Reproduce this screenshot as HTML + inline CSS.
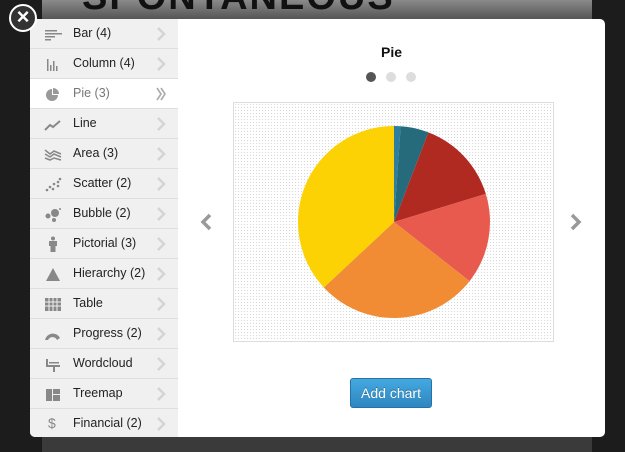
<!DOCTYPE html>
<html><head><meta charset="utf-8"><style>
*{margin:0;padding:0;box-sizing:border-box}
body{width:625px;height:452px;overflow:hidden;background:#1c1c1c;font-family:"Liberation Sans",Arial,sans-serif;position:relative}
.banner{position:absolute;left:42px;top:0;width:550px;height:19px;background:linear-gradient(#8a8a8a,#555);}
.banner span{position:absolute;left:40px;top:-24px;font:900 38px "Liberation Sans",sans-serif;color:#111;letter-spacing:2px}
.bottom{position:absolute;left:42px;top:437px;width:550px;height:15px;background:#3a3a3a}
.modal{position:absolute;left:30px;top:19px;width:575px;height:418px;background:#fff;border-radius:0 5px 5px 5px;overflow:hidden}
.side{position:absolute;left:0;top:0;width:148px;height:418px;background:#f0f0f0}
.row{height:30px;border-bottom:1px solid #dedede;position:relative;font-size:12.5px;color:#222;line-height:29px;padding-left:43px}
.row.sel{background:#fff;color:#777}
.row svg.ic{position:absolute;left:14px;top:7px}
.row svg.ch{position:absolute;left:126px;top:8px}
.title{position:absolute;left:148px;right:0;top:25px;text-align:center;font-weight:bold;font-size:14px;color:#111}
.dot{position:absolute;top:53px;width:10px;height:10px;border-radius:50%;background:#ddd}
.box{position:absolute;left:203px;top:83px;width:321px;height:240px;border:1px solid #ddd;background-color:#fff;background-image:radial-gradient(#d8d8d8 0.6px,transparent 0.8px);background-size:3px 3px}
.btn{position:absolute;left:320px;top:359px;width:82px;height:30px;border-radius:3px;background:linear-gradient(#44a9e0,#2f86c0);border:1px solid #2672a6;color:#fff;font-size:14px;text-align:center;line-height:28px;text-shadow:0 -1px 0 rgba(0,0,0,.3)}
.close{position:absolute;left:9px;top:4px;width:28px;height:28px;border-radius:50%;background:#333;border:2.5px solid #fff;color:#fff;font-size:22px;line-height:21px;text-align:center;font-weight:bold}
</style></head><body>
<div class="banner"><span>SPONTANEOUS</span></div>
<div class="bottom"></div>
<div class="modal">
<div class="side">
<div class="row"><svg class="ic" width="18" height="16"><g fill="#888"><rect x="1" y="4" width="12" height="1.5"/><rect x="1" y="7" width="17" height="1.5"/><rect x="1" y="10" width="10" height="1.5"/><rect x="1" y="13" width="6" height="1.5"/></g></svg>Bar (4)<svg class="ch" width="10" height="14"><path d="M2 1L8 7L2 13" stroke="#d4d4d4" stroke-width="2.5" fill="none"/></svg></div>
<div class="row"><svg class="ic" width="18" height="16"><g fill="#888"><rect x="3" y="3" width="1.5" height="12"/><rect x="6" y="9" width="1.5" height="6"/><rect x="9" y="5" width="1.5" height="10"/><rect x="12" y="10" width="1.5" height="5"/></g></svg>Column (4)<svg class="ch" width="10" height="14"><path d="M2 1L8 7L2 13" stroke="#d4d4d4" stroke-width="2.5" fill="none"/></svg></div>
<div class="row sel"><svg class="ic" width="18" height="16"><path d="M8 3A6 6 0 1 0 14 9H8Z M9 2V8H15A6 6 0 0 0 9 2Z" fill="#999"/></svg>Pie (3)<svg class="ch" width="10" height="14"><path d="M1 1L5 7L1 13M5 1L9 7L5 13" stroke="#aaa" stroke-width="1.6" fill="none"/></svg></div>
<div class="row"><svg class="ic" width="18" height="16"><path d="M1 14L6 9L9 11L16 5" stroke="#888" stroke-width="2" fill="none"/></svg>Line<svg class="ch" width="10" height="14"><path d="M2 1L8 7L2 13" stroke="#d4d4d4" stroke-width="2.5" fill="none"/></svg></div>
<div class="row"><svg class="ic" width="18" height="16"><path d="M1 4L6 8L10 5L17 8M1 8L6 11L10 8L17 11M1 12L6 14L10 12L17 14" stroke="#888" stroke-width="1.5" fill="none"/></svg>Area (3)<svg class="ch" width="10" height="14"><path d="M2 1L8 7L2 13" stroke="#d4d4d4" stroke-width="2.5" fill="none"/></svg></div>
<div class="row"><svg class="ic" width="18" height="16"><g fill="#888"><circle cx="3" cy="14" r="1.3"/><circle cx="6" cy="11" r="1.3"/><circle cx="9" cy="13" r="1.3"/><circle cx="10" cy="8" r="1.3"/><circle cx="14" cy="6" r="1.3"/><circle cx="14" cy="10" r="1.3"/><circle cx="16" cy="3" r="1.3"/></g></svg>Scatter (2)<svg class="ch" width="10" height="14"><path d="M2 1L8 7L2 13" stroke="#d4d4d4" stroke-width="2.5" fill="none"/></svg></div>
<div class="row"><svg class="ic" width="18" height="16"><g fill="#888"><circle cx="11" cy="7" r="4"/><circle cx="4" cy="10" r="2.5"/><circle cx="10" cy="14" r="2"/><circle cx="16" cy="3" r="1"/></g></svg>Bubble (2)<svg class="ch" width="10" height="14"><path d="M2 1L8 7L2 13" stroke="#d4d4d4" stroke-width="2.5" fill="none"/></svg></div>
<div class="row"><svg class="ic" width="18" height="16"><g fill="#888"><circle cx="9" cy="2.5" r="2"/><path d="M5 5H13V10H11.5V16H6.5V10H5Z"/></g></svg>Pictorial (3)<svg class="ch" width="10" height="14"><path d="M2 1L8 7L2 13" stroke="#d4d4d4" stroke-width="2.5" fill="none"/></svg></div>
<div class="row"><svg class="ic" width="18" height="16"><path d="M9 2L16 15H2Z" fill="#888"/></svg>Hierarchy (2)<svg class="ch" width="10" height="14"><path d="M2 1L8 7L2 13" stroke="#d4d4d4" stroke-width="2.5" fill="none"/></svg></div>
<div class="row"><svg class="ic" width="18" height="16"><g fill="#888"><rect x="1" y="2" width="16" height="13"/></g><path d="M1 6H17M1 10H17M5 2V15M9 2V15M13 2V15" stroke="#f0f0f0" stroke-width="1"/></svg>Table<svg class="ch" width="10" height="14"><path d="M2 1L8 7L2 13" stroke="#d4d4d4" stroke-width="2.5" fill="none"/></svg></div>
<div class="row"><svg class="ic" width="18" height="16"><path d="M1 14A8 8 0 0 1 16 12L13 14A5 5 0 0 0 4 14Z" fill="#888"/></svg>Progress (2)<svg class="ch" width="10" height="14"><path d="M2 1L8 7L2 13" stroke="#d4d4d4" stroke-width="2.5" fill="none"/></svg></div>
<div class="row"><svg class="ic" width="18" height="16"><g fill="#888"><rect x="2" y="3" width="2" height="8"/><rect x="2" y="9" width="14" height="2"/><rect x="5" y="6" width="10" height="1.5"/><rect x="9" y="11" width="2" height="5"/></g></svg>Wordcloud<svg class="ch" width="10" height="14"><path d="M2 1L8 7L2 13" stroke="#d4d4d4" stroke-width="2.5" fill="none"/></svg></div>
<div class="row"><svg class="ic" width="18" height="16"><g fill="#888"><rect x="2" y="3" width="6" height="12"/><rect x="9" y="3" width="7" height="5"/><rect x="9" y="9" width="7" height="6"/></g></svg>Treemap<svg class="ch" width="10" height="14"><path d="M2 1L8 7L2 13" stroke="#d4d4d4" stroke-width="2.5" fill="none"/></svg></div>
<div class="row"><span style="position:absolute;left:18px;color:#888;font-size:14px">$</span>Financial (2)<svg class="ch" width="10" height="14"><path d="M2 1L8 7L2 13" stroke="#d4d4d4" stroke-width="2.5" fill="none"/></svg></div>
</div>
<div class="title">Pie</div>
<div class="dot" style="left:336px;background:#555"></div>
<div class="dot" style="left:356px"></div>
<div class="dot" style="left:376px"></div>
<div class="box"></div>
<svg style="position:absolute;left:0;top:0" width="575" height="418">
<path d="M180 196L173 203L180 210" stroke="#999" stroke-width="3.5" fill="none"/>
<path d="M542 196L549 203L542 210" stroke="#999" stroke-width="3.5" fill="none"/>
<g transform="translate(-30,-19)">
<path d="M394 222L394 126A96 96 0 0 1 400.7 126.2Z" fill="#2e7e9d"/>
<path d="M394 222L400.7 126.2A96 96 0 0 1 428.4 132.4Z" fill="#256b7b"/>
<path d="M394 222L428.4 132.4A96 96 0 0 1 485.8 193.9Z" fill="#b02a22"/>
<path d="M394 222L485.8 193.9A96 96 0 0 1 469.6 281.1Z" fill="#e85a4e"/>
<path d="M394 222L469.6 281.1A96 96 0 0 1 323.8 287.5Z" fill="#f18c34"/>
<path d="M394 222L323.8 287.5A96 96 0 0 1 394 126Z" fill="#fdd205"/>
</g></svg>
<div class="btn">Add chart</div>
</div>
<div class="close">×</div>
</body></html>
